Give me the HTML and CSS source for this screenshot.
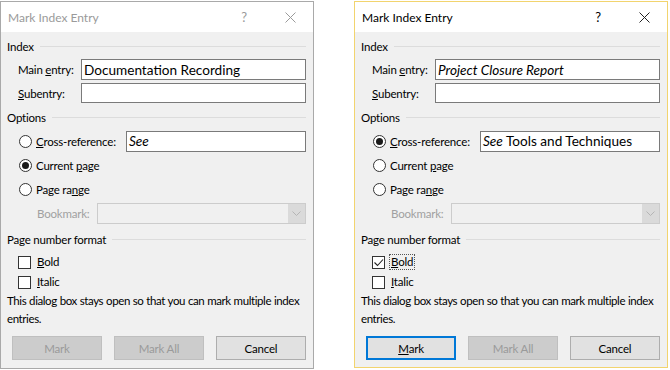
FILE: index.html
```html
<!DOCTYPE html>
<html>
<head>
<meta charset="utf-8">
<link rel="stylesheet" href="styles.css">
</head>
<body>
<div class="canvas">
  <div class="dialog inactive">
    <div class="titlebar">
      <span class="title">Mark Index Entry</span>
      <span class="tbtn help">?</span>
      <span class="tbtn close"><svg width="11" height="11" viewBox="0 0 11 11"><path d="M0.5 0.5 L10.5 10.5 M10.5 0.5 L0.5 10.5" stroke="currentColor" stroke-width="1" fill="none"/></svg></span>
    </div>
    <div class="content">
      <div class="group"><span>Index</span><i class="rule"></i></div>
      <div class="erow first"><span class="elbl">Main <u>e</u>ntry:</span><div class="field">Documentation Recording</div></div>
      <div class="erow sub"><span class="elbl"><u>S</u>ubentry:</span><div class="field"></div></div>
      <div class="group gap"><span>Options</span><i class="rule"></i></div>
      <div class="opts">
        <div class="orow"><span class="radio"></span><span class="olbl"><u>C</u>ross-reference:</span><div class="field xref"><em>See</em></div></div>
        <div class="orow"><span class="radio on"><i></i></span><span class="olbl">Current <u>p</u>age</span></div>
        <div class="orow"><span class="radio"></span><span class="olbl">Page ra<u>n</u>ge</span></div>
        <div class="orow"><span class="bmlbl">Bookmark:</span><div class="combo"><span class="drop"><svg width="9" height="5" viewBox="0 0 9 5"><path d="M0.5 0.5 L4.5 4.5 L8.5 0.5" stroke="#b5b5b5" fill="none"/></svg></span></div></div>
      </div>
      <div class="group gap"><span>Page number format</span><i class="rule"></i></div>
      <div class="checks">
        <div class="crow"><span class="cbox"></span><span class="clbl"><u>B</u>old</span></div>
        <div class="crow"><span class="cbox"></span><span class="clbl"><u>I</u>talic</span></div>
      </div>
      <p class="note">This dialog box stays open so that you can mark multiple index entries.</p>
      <div class="buttons">
        <span class="btn disabled">Mark</span>
        <span class="btn disabled">Mark All</span>
        <span class="btn">Cancel</span>
      </div>
    </div>
  </div>

  <div class="dialog active">
    <div class="titlebar">
      <span class="title">Mark Index Entry</span>
      <span class="tbtn help">?</span>
      <span class="tbtn close"><svg width="11" height="11" viewBox="0 0 11 11"><path d="M0.5 0.5 L10.5 10.5 M10.5 0.5 L0.5 10.5" stroke="currentColor" stroke-width="1" fill="none"/></svg></span>
    </div>
    <div class="content">
      <div class="group"><span>Index</span><i class="rule"></i></div>
      <div class="erow first"><span class="elbl">Main <u>e</u>ntry:</span><div class="field"><em>Project Closure Report</em></div></div>
      <div class="erow sub"><span class="elbl"><u>S</u>ubentry:</span><div class="field"></div></div>
      <div class="group gap"><span>Options</span><i class="rule"></i></div>
      <div class="opts">
        <div class="orow"><span class="radio on"><i></i></span><span class="olbl"><u>C</u>ross-reference:</span><div class="field xref"><em>See</em>&nbsp;Tools and Techniques</div></div>
        <div class="orow"><span class="radio"></span><span class="olbl">Current <u>p</u>age</span></div>
        <div class="orow"><span class="radio"></span><span class="olbl">Page ra<u>n</u>ge</span></div>
        <div class="orow"><span class="bmlbl">Bookmark:</span><div class="combo"><span class="drop"><svg width="9" height="5" viewBox="0 0 9 5"><path d="M0.5 0.5 L4.5 4.5 L8.5 0.5" stroke="#b5b5b5" fill="none"/></svg></span></div></div>
      </div>
      <div class="group gap"><span>Page number format</span><i class="rule"></i></div>
      <div class="checks">
        <div class="crow"><span class="cbox"><svg width="11" height="11" viewBox="0 0 11 11"><path d="M1.5 5.5 L4.5 8.5 L10 2.5" stroke="#222" stroke-width="1.1" fill="none"/></svg></span><span class="clbl focus"><u>B</u>old</span></div>
        <div class="crow"><span class="cbox"></span><span class="clbl"><u>I</u>talic</span></div>
      </div>
      <p class="note">This dialog box stays open so that you can mark multiple index entries.</p>
      <div class="buttons">
        <span class="btn default"><u>M</u>ark</span>
        <span class="btn disabled">Mark All</span>
        <span class="btn">Cancel</span>
      </div>
    </div>
  </div>
</div>
</body>
</html>
```

FILE: styles.css
```css
* { box-sizing: border-box; }
html, body { margin: 0; padding: 0; background: #ffffff; }
body {
  width: 670px;
  height: 370px;
  overflow: hidden;
  font-family: "Lato", "Open Sans", sans-serif;
  font-size: 11.5px;
  letter-spacing: -0.2px;
  color: #000;
}
.canvas {
  display: flex;
  gap: 40px;
  padding-top: 1px;
}
.dialog {
  width: 314px;
  height: 367px;
  background: #f0f0f0;
  border: 1px solid #a9a9a9;
  display: flex;
  flex-direction: column;
}
.dialog.inactive { height: 368px; }
.dialog.active { border-color: #f2d46e; }

.titlebar {
  height: 30px;
  background: #ffffff;
  display: flex;
  align-items: center;
  padding-left: 7px;
  flex: none;
}
.title { font-size: 12px; letter-spacing: 0; }
.inactive .titlebar { color: #9a9a9a; }
.tbtn {
  width: 46px;
  height: 30px;
  display: flex;
  align-items: center;
  justify-content: center;
}
.help { margin-left: auto; font-size: 13px; }
.close svg { display: block; }
.inactive .close { color: #9a9a9a; }
.active .close { color: #222; }

.content {
  padding: 6px 7px 6px 6px;
  flex: 1;
  display: flex;
  flex-direction: column;
}
.group {
  height: 16px;
  display: flex;
  align-items: center;
}
.group.gap { margin-top: 6px; }
.rule {
  flex: 1;
  height: 1px;
  background: #dcdcdc;
  margin-left: 6px;
}
.erow {
  display: flex;
  align-items: center;
}
.erow.first { margin-top: 5px; height: 21px; }
.erow.sub { margin-top: 3px; height: 20px; }
.elbl {
  width: 74px;
  padding-left: 11px;
  flex: none;
  white-space: nowrap;
}
.field {
  flex: 1;
  height: 100%;
  background: #fff;
  border: 1px solid #7a7a7a;
  font-family: "Lato", "Open Sans", sans-serif;
  font-size: 13.6px;
  letter-spacing: 0;
  padding-left: 2px;
  display: flex;
  align-items: center;
  white-space: nowrap;
}
.field em { font-style: italic; }

.opts { margin-top: 4px; }
.orow {
  height: 24px;
  display: flex;
  align-items: center;
}
.radio {
  width: 13px;
  height: 13px;
  border-radius: 50%;
  border: 1px solid #333;
  background: #fff;
  margin-left: 12px;
  flex: none;
  display: flex;
  align-items: center;
  justify-content: center;
}
.radio.on i {
  width: 7px;
  height: 7px;
  border-radius: 50%;
  background: #1a1a1a;
}
.olbl { margin-left: 4px; white-space: nowrap; }
.field.xref {
  flex: none;
  width: 180px;
  height: 21px;
  margin-left: auto;
}
.bmlbl {
  margin-left: 30px;
  color: #a0a0a0;
}
.combo {
  margin-left: auto;
  width: 209px;
  height: 21px;
  border: 1px solid #cccccc;
  background: #f0f0f0;
  display: flex;
  justify-content: flex-end;
}
.drop {
  width: 17px;
  height: 100%;
  background: #dadada;
  display: flex;
  align-items: center;
  justify-content: center;
}
.drop svg { display: block; }

.checks { margin-top: 5px; }
.crow {
  height: 20px;
  display: flex;
  align-items: center;
}
.cbox {
  width: 13px;
  height: 13px;
  border: 1px solid #333;
  background: #fff;
  margin-left: 11px;
  flex: none;
  display: flex;
  align-items: center;
  justify-content: center;
}
.cbox svg { display: block; }
.clbl { margin-left: 4px; border: 1px solid transparent; padding: 0 1px; line-height: 14px; }
.clbl.focus { border: 1px dotted #555; }

.note {
  margin: 0;
  line-height: 18px;
  letter-spacing: -0.4px;
  word-spacing: 0.3px;
}
.buttons {
  margin-top: 8px;
  padding-left: 5px;
  display: flex;
  gap: 12px;
}
.btn {
  width: 90px;
  height: 24px;
  display: flex;
  align-items: center;
  justify-content: center;
  background: #e1e1e1;
  border: 1px solid #adadad;
}
.btn.disabled {
  background: #cccccc;
  border-color: #bfbfbf;
  color: #9a9a9a;
}
.btn.default {
  border: 1px solid #0078d7;
  box-shadow: inset 0 0 0 1px #0078d7;
}
```
